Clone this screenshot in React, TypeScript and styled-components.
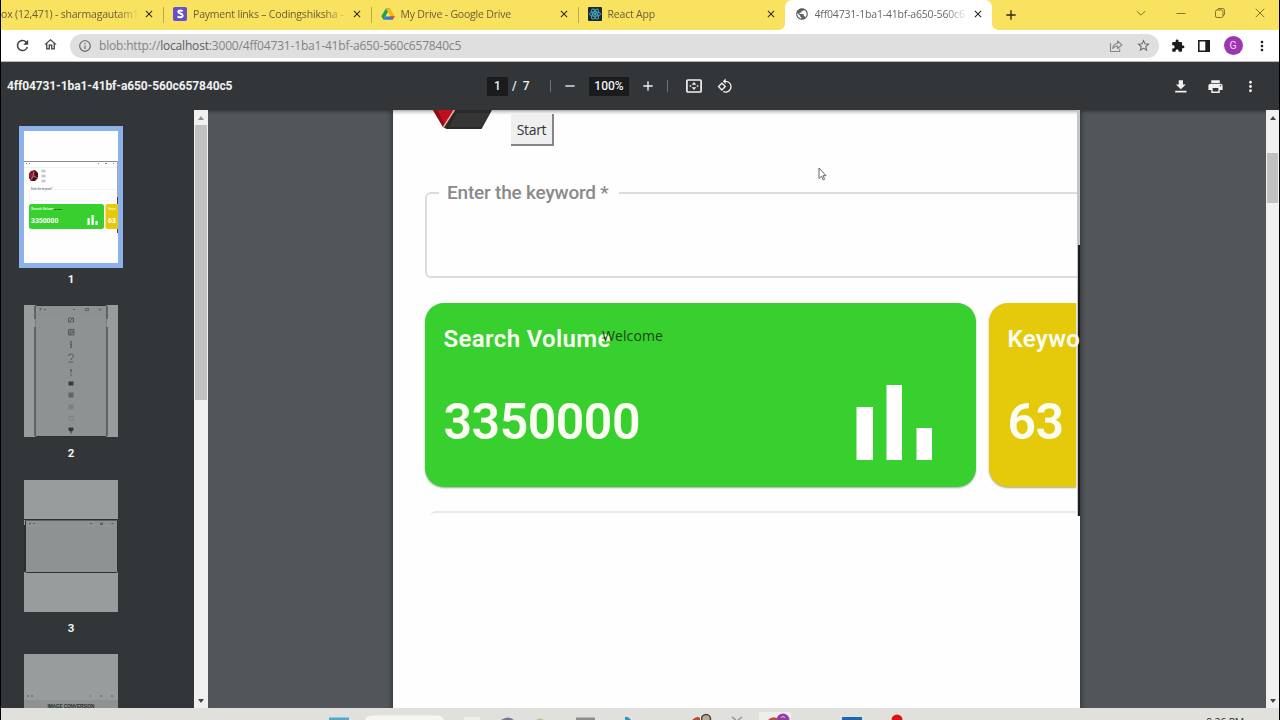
import React from 'react';
import styled, { createGlobalStyle } from 'styled-components';
import {
    MdRefresh, MdOutlineHome, MdInfoOutline, MdStarBorder, MdExtension, MdMoreVert,
    MdPrint, MdClose, MdAdd, MdRemove, MdRotate90DegreesCcw, MdPublic
} from 'react-icons/md';

const GlobalStyle = createGlobalStyle`
    * { box-sizing: border-box; }
    body {
        margin: 0;
        overflow: hidden;
        font-family: Roboto, sans-serif;
    }
    svg { display: block; flex: none; }
`

const Window = styled.div`
    width: 1280px;
    height: 720px;
    display: flex;
    flex-direction: column;
    overflow: hidden;
    border: solid #000;
    border-width: 0 1px;
    background: #fff;
`

/* tab strip */
const TabStrip = styled.div`
    height: 30px;
    flex: none;
    display: flex;
    background: #f9e25f;
`
const Tab = styled.div<{ $width: number; $active?: boolean; $first?: boolean; $last?: boolean }>`
    position: relative;
    width: ${p => p.$width}px;
    height: 30px;
    display: flex;
    align-items: center;
    gap: 6px;
    padding: 0 8px 2px ${p => (p.$first ? 0 : 10)}px;
    background: ${p => (p.$active ? '#fff' : 'transparent')};
    border-radius: 7px 7px 0 0;

    &::after {
        content: '';
        position: absolute;
        right: -1px;
        top: 7px;
        width: 1px;
        height: 16px;
        background: ${p => (p.$active || p.$last ? 'transparent' : '#b9a94f')};
    }
`
const TabCurve = styled.div<{ $side: 'left' | 'right' }>`
    position: absolute;
    bottom: 0;
    ${p => p.$side}: -6px;
    width: 6px;
    height: 6px;
    background: radial-gradient(circle at ${p => p.$side} top, #f9e25f 5.5px, #fff 6px);
`
const TabTitle = styled.div<{ $color?: string }>`
    flex: 1;
    min-width: 0;
    overflow: hidden;
    white-space: nowrap;
    font-family: 'Open Sans', sans-serif;
    font-size: 10.5px;
    line-height: 16px;
    letter-spacing: -0.19px;
    color: ${p => p.$color || '#6a6032'};
    mask-image: linear-gradient(90deg, #000 86%, transparent 102%);
`
const NewTab = styled.div`
    width: 38px;
    display: flex;
    align-items: center;
    justify-content: center;
    padding-bottom: 1px;
`
const WindowButtons = styled.div`
    margin-left: auto;
    display: flex;
    align-items: center;
    gap: 29.7px;
    padding: 0 14px 4px 0;
    color: #83752b;
`

/* address bar */
const Toolbar = styled.div`
    height: 32px;
    flex: none;
    display: flex;
    align-items: center;
    padding: 0 12px 0 13px;
    border-bottom: 1px solid #b9bcbb;
    color: #3c3c3c;
`
const Nav = styled.div`
    display: flex;
    gap: 12px;
    width: 56px;
`
const Omnibox = styled.div`
    width: 1089px;
    height: 24px;
    flex: none;
    display: flex;
    align-items: center;
    gap: 7px;
    padding: 0 8px 0 8px;
    border-radius: 12px;
    background: #dfdfdf;
    color: #666;
`
const Url = styled.div`
    flex: 1;
    white-space: nowrap;
    font-family: 'Open Sans', sans-serif;
    font-size: 12px;
    line-height: 18px;
    letter-spacing: -0.18px;
    color: #838383;

    span { color: #5c5c5c; }
`
const Actions = styled.div`
    flex: 1;
    display: flex;
    align-items: center;
    justify-content: space-between;
    padding-left: 12px;
    margin-right: -2px;
    color: #1c1c1c;

    svg:last-child { margin: 0 -1px 0 -2px; }
`
const Avatar = styled.div`
    width: 19px;
    height: 19px;
    border-radius: 50%;
    background: #9c36b0;
    color: #f0d8f5;
    font-size: 10.5px;
    line-height: 19px;
    text-align: center;
`

/* pdf viewer */
const PdfBar = styled.div`
    height: 48px;
    flex: none;
    display: grid;
    grid-template-columns: 486px 1fr 113px;
    align-items: center;
    background: #323639;
    color: #f1f1f1;
    font-size: 12px;
    font-weight: 500;
`
const FileName = styled.div`
    padding-left: 6px;
    font-weight: 700;
    letter-spacing: -0.1px;
`
const PdfTools = styled.div`
    display: flex;
    align-items: center;
`
const Field = styled.div<{ $width: number }>`
    width: ${p => p.$width}px;
    height: 19px;
    line-height: 19px;
    text-align: center;
    background: #191b1c;
`
const PageTotal = styled.div`
    width: 42px;
    padding-left: 4px;
    word-spacing: 3px;
`
const Divider = styled.div`
    width: 1px;
    height: 12px;
    background: #6d7173;
`
const Tool = styled.div<{ $width: number }>`
    width: ${p => p.$width}px;
    display: flex;
    justify-content: center;
`
const PdfActions = styled.div`
    display: flex;
    align-items: center;
    gap: 18px;
    padding-left: 6px;
`
const Viewer = styled.div`
    height: 598px;
    flex: none;
    display: flex;
    background: #525659;
`
const Sidebar = styled.div`
    width: 193px;
    height: 598px;
    overflow: hidden;
    background: #323639;
    padding: 15.7px 0 0 18px;
`
const ThumbItem = styled.div`
    width: 104px;
    height: 174.5px;
    display: flex;
    flex-direction: column;
    align-items: center;
    color: #f1f1f1;
    font-size: 11.5px;
    font-weight: 700;
    line-height: 14px;
`
const ThumbFrame = styled.div<{ $selected?: boolean }>`
    width: 104px;
    height: 142px;
    margin-bottom: 4px;
    border: 5px solid ${p => (p.$selected ? '#8db1ea' : 'transparent')};
`
const Scrollbar = styled.div<{ $width: number }>`
    width: ${p => p.$width}px;
    height: 598px;
    flex: none;
    display: flex;
    flex-direction: column;
    align-items: center;
    background: #f0f0f0;
`
const Arrow = styled.div<{ $down?: boolean; $dim?: boolean }>`
    width: 0;
    height: 0;
    margin: ${p => (p.$down ? 'auto 0 5px' : '6px 0 5px')};
    border: 3px solid transparent;
    border-width: ${p => (p.$down ? '4px 3px 0' : '0 3px 4px')};
    border-${p => (p.$down ? 'top' : 'bottom')}-color: ${p => (p.$dim ? '#909090' : '#444')};
`
const Thumb = styled.div<{ $top: number; $height: number }>`
    width: calc(100% - 2px);
    height: ${p => p.$height}px;
    margin-top: ${p => p.$top}px;
    background: #c1c1c1;
`
const Stage = styled.div`
    flex: 1;
    padding-left: 185px;
    box-shadow: inset 0 4px 3px -2px rgba(0, 0, 0, 0.3);
`
const Page = styled.div`
    position: relative;
    width: 687px;
    height: 598px;
    background: #fefefe;
    box-shadow: 0 0 5px 1px rgba(30, 25, 25, 0.65), inset 0 5px 4px -4px #888;
    clip-path: inset(0 -6px);
`
const Capture = styled.div`
    width: 687px;
    height: 406px;
    display: flex;
    overflow: hidden;
`
const CaptureBody = styled.div`
    width: 684px;
    flex: none;
    padding-left: 32px;
`
const CaptureEdge = styled.div`
    width: 3px;
    height: 406px;
    flex: none;
    background: linear-gradient(90deg, #bbb, #dcdcdc) 0 0 / 3px 135px no-repeat, #1d1b1c;
    border-left: 1px solid #c8c8c0;
`
const TopRow = styled.div`
    height: 71px;
    display: flex;
    align-items: flex-start;
    gap: 17px;
    padding-left: 7px;
`
const StartButton = styled.div`
    width: 43px;
    height: 32px;
    margin-top: 4px;
    border: solid #85858a;
    border-width: 0 2px 2px 0;
    background: #efefef;
    color: #333;
    font-family: 'Open Sans', sans-serif;
    font-size: 14px;
    font-weight: 500;
    line-height: 32px;
    text-align: center;
    letter-spacing: -0.35px;
`
const KeywordField = styled.fieldset`
    width: 653px;
    height: 97px;
    margin: 0;
    padding: 0;
    border: 2px solid #dcdcdc;
    border-right: 0;
    border-radius: 6px 0 0 6px;
`
const KeywordLabel = styled.legend`
    height: 24px;
    margin-left: 12px;
    padding: 0 10px 0 8px;
    font-size: 19px;
    font-weight: 500;
    letter-spacing: -0.2px;
    line-height: 24px;
    color: #8a8a8a;
`
const Cards = styled.div`
    display: flex;
    gap: 13px;
    padding-top: 24.500px;
`
const Card = styled.div<{ $color: string; $width: number; $cut?: boolean }>`
    position: relative;
    width: ${p => p.$width}px;
    height: 184px;
    flex: none;
    padding: 21px 0 0 18.5px;
    background: ${p => p.$color};
    border-radius: ${p => (p.$cut ? '19px 0 0 19px' : '19px')};
    box-shadow: 0 1px 2px rgba(0, 0, 0, 0.35);
    color: #fbfdf3;
    white-space: nowrap;
`
const CardTitle = styled.div`
    height: 30px;
    font-size: 24px;
    font-weight: 600;
    line-height: 31px;
    letter-spacing: 0.35px;
`
const CardValue = styled.div`
    display: flex;
    justify-content: space-between;
    padding: 31px 44px 0 0;
    font-size: 50px;
    font-weight: 600;
    line-height: 75px;
    letter-spacing: -0.5px;
`
const Welcome = styled.div`
    position: absolute;
    left: 177px;
    top: 23px;
    font-family: 'Open Sans', sans-serif;
    font-size: 14px;
    font-weight: 500;
    line-height: 20px;
    letter-spacing: 0.1px;
    color: #174716;
`
const NextBlock = styled.div`
    width: 646px;
    height: 10px;
    margin: 24px 0 0 5px;
    border-top: 2px solid #e9e9e9;
    border-radius: 6px 0 0 0;
`
const Cursor = styled.svg`
    position: absolute;
    left: 425px;
    top: 57px;
`
const Taskbar = styled.div`
    height: 12px;
    flex: none;
    background: #e0e0dc;
    overflow: hidden;
    display: flex;
    justify-content: space-between;
`
const Clock = styled.div`
    margin-left: auto;
    margin-right: 35px;
    padding-top: 7px;
    font-family: 'Open Sans', sans-serif;
    font-size: 10.5px;
    line-height: 14px;
    letter-spacing: -0.2px;
    color: #333;
`

const StripeIcon = () => (
    <svg width="14" height="14" viewBox="0 0 14 14">
        <rect width="14" height="14" rx="2" fill="#6650c8" />
        <path d="M9.7 4.1C8.6 3.4 5.3 2.8 5.2 4.7c0 2.1 4.6 1.5 4.5 3.9 0 2.2-3.5 1.9-5.2 1" fill="none" stroke="#fff" strokeWidth="1.9" />
    </svg>
)

const DriveIcon = () => (
    <svg width="14" height="14" viewBox="0 0 14 14">
        <path d="M4.8 1.5h4.4L4.6 9.2 2.4 12.8.3 9.3z" fill="#20a052" />
        <path d="M4.8 1.5h4.4l4.5 7.8H9.4z" fill="#f3bb18" />
        <path d="M4.6 9.3h9.1l-2.1 3.5H2.4z" fill="#3478de" />
        <path d="M9.4 9.3h4.3l-2.1 3.5z" fill="#df4b35" />
        <path d="M7 5.3l2.3 4H4.7z" fill="#f9e25f" />
    </svg>
)

const ReactIcon = () => (
    <svg width="14" height="14" viewBox="0 0 14 14">
        <rect width="14" height="14" rx="1" fill="#20282c" />
        <g fill="none" stroke="#45afd0" strokeWidth=".9">
            <ellipse cx="7" cy="7" rx="5.6" ry="2.2" />
            <ellipse cx="7" cy="7" rx="5.6" ry="2.2" transform="rotate(60 7 7)" />
            <ellipse cx="7" cy="7" rx="5.6" ry="2.2" transform="rotate(120 7 7)" />
        </g>
        <circle cx="7" cy="7" r="1.2" fill="#45afd0" />
    </svg>
)

const WindowIcons = () => (
    <WindowButtons>
        <svg width="10" height="10" viewBox="0 0 10 10" fill="none" stroke="currentColor"><path d="M.8 3l4.2 4.2L9.2 3" /></svg>
        <svg width="10" height="10" viewBox="0 0 10 10" fill="none" stroke="currentColor"><path d="M.5 5.5h9" /></svg>
        <svg width="10" height="10" viewBox="0 0 10 10" fill="none" stroke="currentColor">
            <rect x=".5" y="2" width="7.5" height="7.5" rx="1.5" />
            <path d="M2.5 1.9Q2.7.5 4 .5h3.6Q9.5.5 9.5 2.4V6Q9.5 7.3 8 7.7" />
        </svg>
        <svg width="10" height="10" viewBox="0 0 10 10" fill="none" stroke="currentColor"><path d="M.7.7l8.6 8.6M9.3.7L.7 9.3" /></svg>
    </WindowButtons>
)

const ShareIcon = () => (
    <svg width="14" height="14" viewBox="0 0 14 14" fill="none" stroke="#858585" strokeWidth="1.1">
        <path d="M1.5 4.2v8.3h9.2V9.8" />
        <path d="M3.7 9.5C4 6.3 5.6 4.7 8.6 4.5V2l4.3 3.8-4.3 3.7V7.1C6.4 7 5 7.8 3.7 9.5z" strokeLinejoin="round" />
    </svg>
)

const SidePanelIcon = () => (
    <svg width="12" height="12" viewBox="0 0 12 12">
        <path d="M.8.8h10.4v10.4H.8z" fill="none" stroke="#1c1c1c" strokeWidth="1.6" />
        <path d="M7.3 0H12v12H7.3z" fill="#1c1c1c" />
    </svg>
)

const FitIcon = () => (
    <svg width="16" height="14" viewBox="0 0 16 14">
        <rect x=".9" y="1" width="14.2" height="12" rx="1" fill="none" stroke="#f1f1f1" strokeWidth="1.7" />
        <path d="M8 3l2.3 2.7H5.7zM8 11l2.3-2.7H5.7zM3.7 6.3h1.500v1.400H3.700zM10.800 6.300h1.500v1.400h-1.500z" fill="#f1f1f1" />
    </svg>
)

const DownloadIcon = () => (
    <svg width="17" height="17" viewBox="0 0 24 24" fill="#f1f1f1">
        <path d="M19.500 9h-4V3h-6v6h-4l7 7zM4.500 18v2.400h16V18z" />
    </svg>
)

const GemLogo = () => (
    <svg width="62" height="20" viewBox="0 0 62 20">
        <path d="M1 0h21L11 17z" fill="#c00f1c" />
        <path d="M1 0h4l7.5 14-1.5 3z" fill="#8c0b17" />
        <path d="M23 0h37L49.5 19H14.5L11 17z" fill="#292929" />
        <path d="M25 3h33L49 17H17z" fill="#353535" />
        <path d="M22.3 0L11.5 17" stroke="#efaaa8" strokeWidth="1.4" />
    </svg>
)

const BarsIcon = () => (
    <svg width="76" height="75" viewBox="0 0 76 75" fill="#fff">
        <path d="M.5 22H17v53H.5zM30.5 0H46v75H30.5zM60.5 43H76v32H60.5z" />
    </svg>
)

const FirstThumb = () => (
    <svg width="94" height="132" viewBox="0 0 94 132" fontFamily="Roboto" fontWeight="700">
        <rect width="94" height="132" fill="#fefefe" />
        <path d="M0 30.5h94" stroke="#8a8a8a" />
        <path d="M2 32.5h1M5 32.5h1M74 32.5h1M81 32.5h2M89 32.5h1" stroke="#888" />
        <path d="M93.5 30v72" stroke="#aaa" />
        <path d="M93.5 66v36" stroke="#444" />
        <path d="M0 36.5h93" stroke="#f2f2f2" />
        <path d="M7 40l4-1 3 3v5l-3 3H7l-2-3v-4z" fill="#3b171c" />
        <path d="M5 42l5-2 1 5-3 4-3-3z" fill="#9c1725" />
        <path d="M10 40l-1 5 5 2M9 45l-2 4" stroke="#cf8c8c" strokeWidth=".7" fill="none" />
        <path d="M17 38.5h5v3h-5zM17 43.5h5v3h-5zM17 48.5h5v3h-5z" fill="#e2e2e2" />
        <path d="M18 40h3M18 45h3M18 50h3" stroke="#999" strokeWidth=".8" />
        <path d="M5.5 58.5V70H93M29 58.5h64" stroke="#f1f1f1" fill="none" />
        <text x="7" y="59" fontSize="2.6" fill="#888" textLength="22">Enter the keyword *</text>
        <rect x="5" y="73" width="75" height="25" rx="2.5" fill="#37d02f" />
        <path d="M94 73H84q-2.500 0-2.500 2.500v20q0 2.500 2.500 2.500h10z" fill="#e4ca0b" />
        <text x="7" y="79" fontSize="3.4" fill="#dcffd6">Search Volume</text>
        <text x="29" y="78.5" fontSize="2.2" fill="#143d12">Welcome</text>
        <text x="7" y="91.5" fontSize="6.8" fill="#fff">3350000</text>
        <text x="84" y="79" fontSize="3.3" fill="#fff3a0">Keyw</text>
        <text x="84" y="91.5" fontSize="6.8" fill="#fff">63</text>
        <path d="M63.5 87h2.200v7h-2.200zM67.500 84h2.200v10h-2.200zM71.500 90h2.200v4h-2.200z" fill="#fff" />
    </svg>
)

const SecondThumb = () => (
    <svg width="94" height="132" viewBox="0 0 94 132">
        <rect width="94" height="132" fill="#989c9d" />
        <rect x="11" y=".5" width="72" height="131" rx="1.5" fill="#8e9292" stroke="#2c3032" />
        <path d="M10.5 14v8M83.5 14v8" stroke="#989c9d" strokeWidth="2" />
        <path d="M12 9h70" stroke="#868b8b" strokeWidth=".5" />
        <path d="M15.5 3.5h1.500l-1 2M20 4.500h2M49 4.500h2M61.500 3.500h3v2h-3zM75 3.500l2 2m0-2l-2 2" stroke="#4f5455" strokeWidth=".8" fill="none" />
        <g fill="none" stroke="#555a5b" strokeWidth="1">
            <path d="M44.5 13h5v4h-5zM45 17l4-4" />
            <path d="M44.5 24.5h5.500v5.500h-5.500zM46 26h3v2h-3zM46 30v-2" />
            <path d="M47 36v7M46 37h2M46 42h2M46 39.5h2" />
            <path d="M44.5 51q0-2 2.500-2t2.500 2q0 1.500-2.500 3v1M44.500 57h5" />
            <path d="M47 64v4M46 65h2M46 70h2" />
        </g>
        <path d="M44.5 76.5h5v4h-5z" fill="#343a3b" />
        <path d="M44.5 87.5h5v5h-5z" fill="#5f6465" />
        <path d="M44.5 99.5h5v5h-5z" fill="#7a7f7f" />
        <path d="M45 111.5h4.500v4H45z" fill="none" stroke="#7a7f7f" strokeWidth=".8" />
        <path d="M44.5 122.5h5v3l-2 1v2h-1v-2l-2-1z" fill="#343a3b" />
    </svg>
)

const ThirdThumb = () => (
    <svg width="94" height="132" viewBox="0 0 94 132">
        <rect width="94" height="132" fill="#989c9d" />
        <rect x="1.5" y="40" width="92" height="52.5" rx="1" fill="#8e9292" stroke="#2c3032" />
        <path d="M0 39.5h94" stroke="#2c3032" />
        <path d="M1 45v47" stroke="#2c3032" strokeWidth="2" />
        <path d="M2.5 46h90" stroke="#939797" />
        <path d="M5 43.5h2M9 43.5h2M66 43.5h2M76.5 43h2v1.500h-2zM87.500 43.500h2" stroke="#4f5455" strokeWidth=".9" fill="none" />
    </svg>
)

const FourthThumb = () => (
    <svg width="94" height="132" viewBox="0 0 94 132">
        <rect width="94" height="132" fill="#989c9d" />
        <path d="M0 46h94v86H0z" fill="#8e9292" />
        <path d="M3 42h2M7 42h2M66 42h1M76 42h2M87 42h2" stroke="#4f5455" />
        <text x="47" y="53.5" textAnchor="middle" textLength="47" fontFamily="Liberation Sans" fontWeight="700" fontSize="4.7" fill="#26292a">IMAGE CONVERSION</text>
    </svg>
)

const TaskbarIcons = () => (
    <svg width="700" height="12" viewBox="0 0 700 12">
        <path d="M328 9.5h20v3h-20z" fill="#54a9ca" />
        <rect x="364" y="7.5" width="79" height="20" rx="6" fill="#f6f6f3" />
        <path d="M463 9h16v3h-16z" fill="#f0f0ea" />
        <path d="M500 12q7-5 13 0z" fill="#7b7590" />
        <path d="M535 12q4-3 8 0z" fill="#c9bd85" />
        <path d="M575 9.5h19v3h-19z" fill="#8d8d8d" />
        <path d="M624 12V9q3-1 6 3z" fill="#2d97cc" />
        <path d="M691 12q5-5 8-2v2z" fill="#b84c3d" />
    </svg>
)

const TaskbarIconsRight = () => (
    <svg width="230" height="12" viewBox="0 0 230 12">
        <circle cx="5" cy="11" r="4.5" fill="#b9aa93" stroke="#4d4037" strokeWidth="1.5" />
        <path d="M31 9l4 3M41 9l-4 3" stroke="#8e9596" strokeWidth="1.5" />
        <rect x="58" y="4" width="32" height="12" rx="2" fill="#eeeeeb" />
        <path d="M67 12q5-5 10-1v1z" fill="#c14d3b" />
        <circle cx="82" cy="12" r="6.5" fill="#963fa2" />
        <path d="M80 9.5q2-2 4 0" stroke="#e7c5eb" fill="none" />
        <path d="M141 9h20v3h-20z" fill="#1e67b0" />
        <circle cx="196" cy="12" r="5.5" fill="#db1212" />
    </svg>
)

const thumbs = [FirstThumb, SecondThumb, ThirdThumb, FourthThumb];

const App = () => {
    return (
        <Window>
            <GlobalStyle />
            <TabStrip>
                <Tab $width={162} $first>
                    <TabTitle>ox (12,471) - sharmagautam1</TabTitle>
                    <MdClose size={12} color="#2b2710" />
                </Tab>
                <Tab $width={207.5}>
                    <StripeIcon />
                    <TabTitle>Payment links – Codingshiksha –</TabTitle>
                    <MdClose size={12} color="#2b2710" />
                </Tab>
                <Tab $width={207}>
                    <DriveIcon />
                    <TabTitle>My Drive - Google Drive</TabTitle>
                    <MdClose size={12} color="#2b2710" />
                </Tab>
                <Tab $width={207} $last>
                    <ReactIcon />
                    <TabTitle>React App</TabTitle>
                    <MdClose size={12} color="#2b2710" />
                </Tab>
                <Tab $width={207.5} $active>
                    <TabCurve $side="left" />
                    <MdPublic size={14} color="#5a6064" />
                    <TabTitle $color="#666">4ff04731-1ba1-41bf-a650-560c6</TabTitle>
                    <MdClose size={12} color="#222" />
                    <TabCurve $side="right" />
                </Tab>
                <NewTab><MdAdd size={16} color="#2b2710" /></NewTab>
                <WindowIcons />
            </TabStrip>

            <Toolbar>
                <Nav>
                    <MdRefresh size={17} />
                    <MdOutlineHome size={15} />
                </Nav>
                <Omnibox>
                    <MdInfoOutline size={14} />
                    <Url>blob:http://<span>localhost</span>:3000/4ff04731-1ba1-41bf-a650-560c657840c5</Url>
                    <ShareIcon />
                    <MdStarBorder size={15} style={{ marginLeft: 6 }} />
                </Omnibox>
                <Actions>
                    <MdExtension size={14} />
                    <SidePanelIcon />
                    <Avatar>G</Avatar>
                    <MdMoreVert size={16} />
                </Actions>
            </Toolbar>

            <PdfBar>
                <FileName>4ff04731-1ba1-41bf-a650-560c657840c5</FileName>
                <PdfTools>
                    <Field $width={21}>1</Field>
                    <PageTotal>/ 7</PageTotal>
                    <Divider />
                    <Tool $width={38}><MdRemove size={16} /></Tool>
                    <Field $width={40}>100%</Field>
                    <Tool $width={38}><MdAdd size={16} /></Tool>
                    <Divider />
                    <Tool $width={51}><FitIcon /></Tool>
                    <Tool $width={12}><MdRotate90DegreesCcw size={16} /></Tool>
                </PdfTools>
                <PdfActions>
                    <DownloadIcon />
                    <MdPrint size={17} />
                    <MdMoreVert size={17} />
                </PdfActions>
            </PdfBar>

            <Viewer>
                <Sidebar>
                    {thumbs.map((Picture, i) => (
                        <ThumbItem key={i}>
                            <ThumbFrame $selected={i === 0}><Picture /></ThumbFrame>
                            {i + 1}
                        </ThumbItem>
                    ))}
                </Sidebar>
                <Scrollbar $width={14}>
                    <Arrow $dim />
                    <Thumb $top={0} $height={275} />
                    <Arrow $down />
                </Scrollbar>
                <Stage>
                    <Page>
                        <Capture>
                            <CaptureBody>
                                <TopRow>
                                    <GemLogo />
                                    <StartButton>Start</StartButton>
                                </TopRow>
                                <KeywordField>
                                    <KeywordLabel>Enter the keyword *</KeywordLabel>
                                </KeywordField>
                                <Cards>
                                    <Card $color="#37d02f" $width={551}>
                                        <CardTitle>Search Volume</CardTitle>
                                        <CardValue>3350000 <BarsIcon /></CardValue>
                                        <Welcome>Welcome</Welcome>
                                    </Card>
                                    <Card $color="#e4ca0b" $width={87} $cut>
                                        <CardTitle>Keyword</CardTitle>
                                        <CardValue>63</CardValue>
                                    </Card>
                                </Cards>
                                <NextBlock />
                            </CaptureBody>
                            <CaptureEdge />
                        </Capture>
                        <Cursor width="9" height="14" viewBox="0 0 9 14">
                            <path d="M1 1v10.5l2.500-2.300 1.600 3.700 1.500-.7L5 8.700h3z" fill="#fff" stroke="#555" strokeWidth=".9" />
                        </Cursor>
                    </Page>
                </Stage>
                <Scrollbar $width={13}>
                    <Arrow />
                    <Thumb $top={28} $height={50} />
                    <Arrow $down />
                </Scrollbar>
            </Viewer>

            <Taskbar>
                <TaskbarIcons />
                <TaskbarIconsRight />
                <Clock>9:26 PM</Clock>
            </Taskbar>
        </Window>
    );
}

export default App;
